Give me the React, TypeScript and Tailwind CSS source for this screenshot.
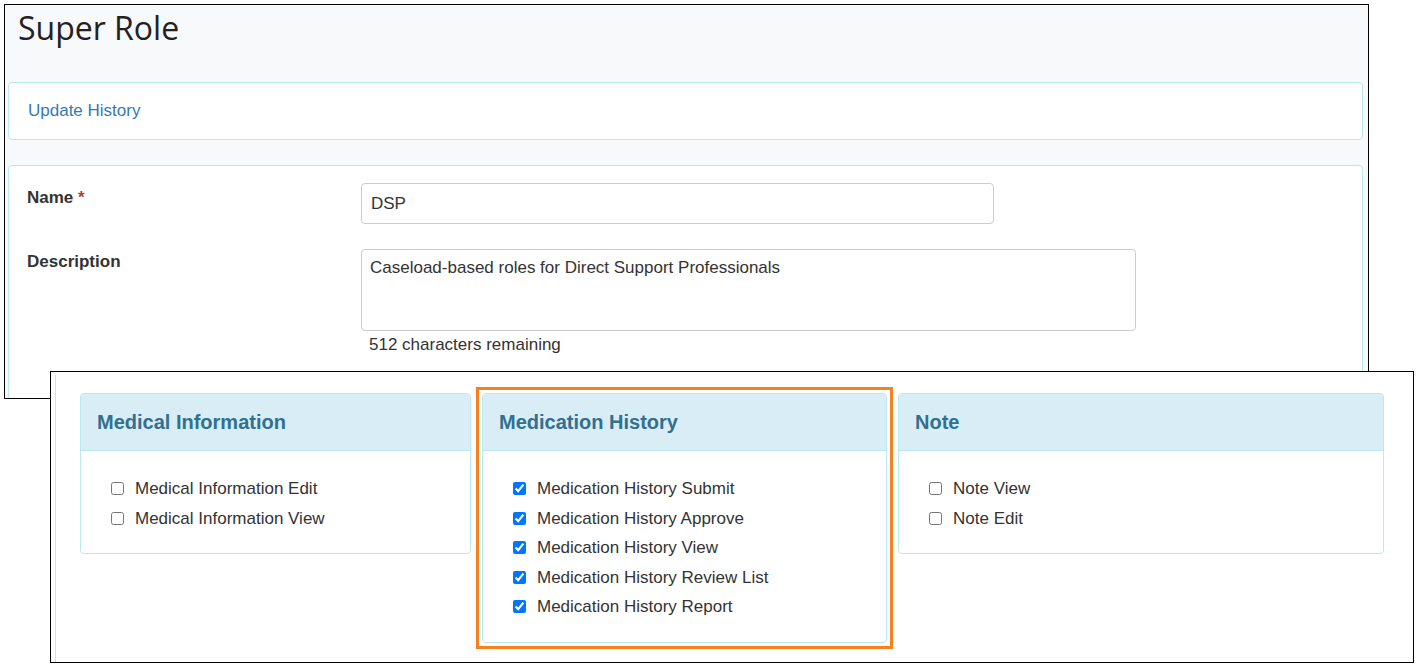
import React from "react";

const font = { fontFamily: '"Liberation Sans", Arial, sans-serif' };

function Card({ title, items, checked }: { title: string; items: string[]; checked?: boolean }) {
  return (
    <div className="bg-white border border-[#bce8f1] rounded-[4px] overflow-hidden">
      <div className="h-[57px] bg-[#d9edf7] border-b border-[#bce8f1] flex items-center pl-[16px] text-[20px] font-bold text-[#31708f]">
        {title}
      </div>
      <div className="pt-[23px] pb-[20px] pl-[30px] text-[17px] text-[#333]">
        {items.map((t) => (
          <label key={t} className="flex items-center h-[29.5px] gap-[11px]">
            <input type="checkbox" defaultChecked={checked} className="w-[13px] h-[13px] m-0 accent-[#0075ff]" />
            <span>{t}</span>
          </label>
        ))}
      </div>
    </div>
  );
}

export default function App() {
  return (
    <div className="relative w-[1418px] h-[666px] bg-white overflow-hidden" style={font}>
      <div className="absolute left-[4px] top-[4px] w-[1365px] h-[395px] border border-black bg-[#f8f9fa] overflow-hidden">
        <h1 className="pl-[13px] pt-[3px] h-[40px] text-[32px] leading-[40px] text-[#222]" style={{ fontFamily: '"Open Sans", sans-serif' }}>
          Super Role
        </h1>
        <div className="mt-[37px] ml-[3px] w-[1355px] h-[58px] bg-white border border-[#bce8f1] rounded-[4px] flex items-center pl-[19px] text-[17px] text-[#337ab7]">
          Update History
        </div>
        <div className="mt-[25px] ml-[3px] w-[1355px] h-[260px] bg-white border border-[#bce8f1] rounded-[4px] pt-[17px] pl-[18px] text-[17px] text-[#333]">
          <div className="flex">
            <div className="w-[334px] font-bold pt-[2px]">
              Name <span className="text-[#a94442]">*</span>
            </div>
            <div className="w-[633px] h-[41px] border border-[#ccc] rounded-[4px] flex items-center pl-[9px]">DSP</div>
          </div>
          <div className="flex mt-[25px]">
            <div className="w-[334px] font-bold pt-[0px]">Description</div>
            <div>
              <div className="w-[775px] h-[82px] border border-[#ccc] rounded-[4px] pl-[8px] pt-[5px]">
                Caseload-based roles for Direct Support Professionals
              </div>
              <div className="pl-[8px] mt-[1px]">512 characters remaining</div>
            </div>
          </div>
        </div>
      </div>

      <div className="absolute left-[50px] top-[371px] w-[1364px] h-[292px] border border-black bg-white">
        <div className="absolute left-[4px] top-[3px] bottom-0 border-l border-[#bce8f1]" />
        <div className="flex items-start gap-[11px] pl-[29px] pt-[21px]">
          <div className="w-[391px]">
            <Card title="Medical Information" items={["Medical Information Edit", "Medical Information View"]} />
          </div>
          <div className="w-[417px] -m-[6px] p-[3px] border-[3px] border-[#f5821f]">
            <Card
              title="Medication History"
              checked
              items={[
                "Medication History Submit",
                "Medication History Approve",
                "Medication History View",
                "Medication History Review List",
                "Medication History Report",
              ]}
            />
          </div>
          <div className="w-[486px]">
            <Card title="Note" items={["Note View", "Note Edit"]} />
          </div>
        </div>
      </div>
    </div>
  );
}
